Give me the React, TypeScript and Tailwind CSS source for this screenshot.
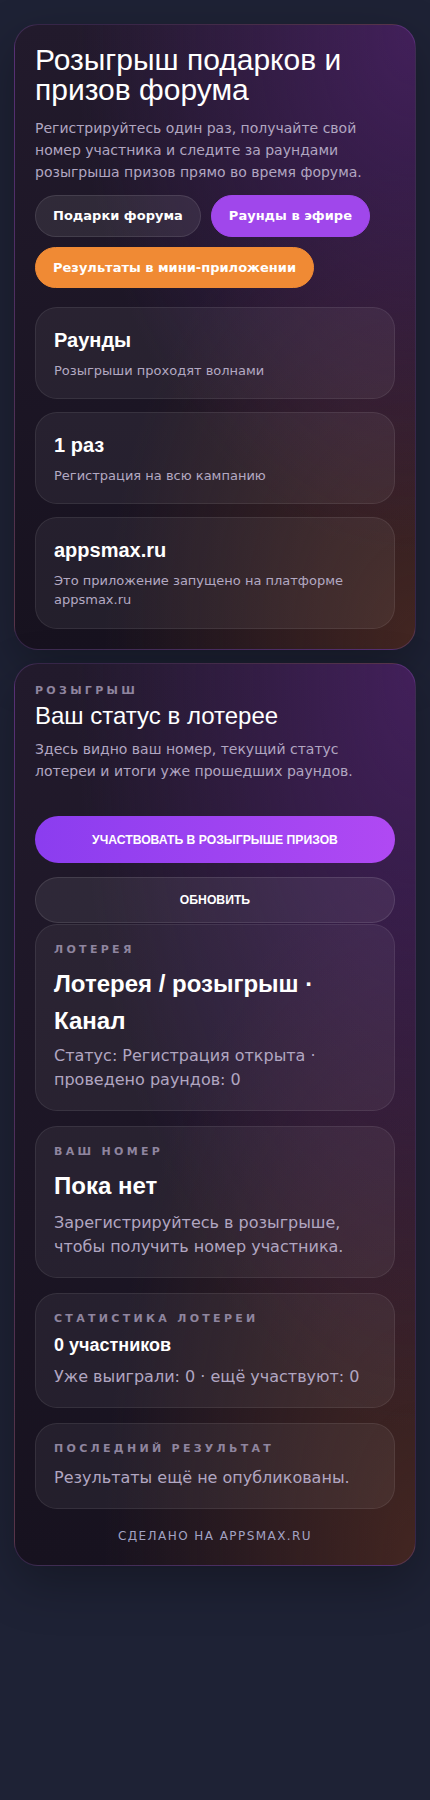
import React from "react";

const sans = "font-['DejaVu_Sans',sans-serif]";
const head = "font-['Liberation_Sans',Arial,sans-serif]";

const shell =
  "rounded-[24px] border border-[rgba(168,110,220,0.22)] p-5 shadow-[0_18px_50px_rgba(0,0,0,0.28)] bg-[radial-gradient(ellipse_at_100%_0%,rgba(80,34,110,0.7),transparent_60%),radial-gradient(ellipse_at_100%_100%,rgba(90,48,34,0.65),transparent_55%),linear-gradient(180deg,#221a2c,#17121f)]";

const tile =
  "rounded-[22px] border border-[rgba(255,255,255,0.08)] bg-[rgba(255,255,255,0.055)]";

function Stat({ title, text }: { title: string; text: string }) {
  return (
    <div className={`${tile} px-[18px] py-[18px]`}>
      <div className={`${head} text-[20px] leading-[28px] font-bold text-white`}>{title}</div>
      <div className={`${sans} mt-[6.5px] text-[13px] leading-[19.5px] text-[#b3a9c2]`}>{text}</div>
    </div>
  );
}

function Label({ children }: { children: React.ReactNode }) {
  return (
    <div className={`${sans} text-[11px] leading-[13px] font-bold uppercase tracking-[0.3em] text-[#8f859f]`}>
      {children}
    </div>
  );
}

export default function App() {
  return (
    <div className={`${sans} min-h-[1800px] bg-[#1e2235] px-[14px] pt-[24px]`}>
      <div className="flex flex-col gap-[13px]">
        {/* intro card */}
        <section className={shell}>
          <h1 className={`${head} text-[30px] leading-[30px] font-normal text-white`}>
            Розыгрыш подарков и призов форума
          </h1>
          <p className="mt-[12px] text-[14px] leading-[22px] text-[#b1a6c1]">
            Регистрируйтесь один раз, получайте свой номер участника и следите за раундами розыгрыша призов прямо во время форума.
          </p>
          <div className="mt-[12px] flex flex-wrap gap-[10px]">
            <span className="rounded-full border border-[rgba(255,255,255,0.1)] bg-[rgba(255,255,255,0.08)] px-[17px] py-[10px] text-[13px] leading-[19.5px] font-bold text-white">
              Подарки форума
            </span>
            <span className="rounded-full border border-[#a047eb] bg-[#a047eb] px-[17px] py-[10px] text-[13px] leading-[19.5px] font-bold text-white">
              Раунды в эфире
            </span>
            <span className="rounded-full border border-[#f08a34] bg-[#f08a34] px-[17px] py-[10px] text-[13px] leading-[19.5px] font-bold text-white">
              Результаты в мини-приложении
            </span>
          </div>
          <div className="mt-[19px] flex flex-col gap-[13px]">
            <Stat title="Раунды" text="Розыгрыши проходят волнами" />
            <Stat title="1 раз" text="Регистрация на всю кампанию" />
            <Stat title="appsmax.ru" text="Это приложение запущено на платформе appsmax.ru" />
          </div>
        </section>

        {/* lottery status card */}
        <section className={shell}>
          <Label>Розыгрыш</Label>
          <h2 className={`${head} mt-[4px] text-[24px] leading-[29px] font-normal text-white`}>
            Ваш статус в лотерее
          </h2>
          <p className="mt-[8px] text-[14px] leading-[22.4px] text-[#b1a6c1]">
            Здесь видно ваш номер, текущий статус лотереи и итоги уже прошедших раундов.
          </p>

          <div className="mt-[34px] flex flex-col gap-[14px]">
            <button className={`${head} h-[47px] w-full rounded-full bg-[linear-gradient(90deg,#8b3def,#b049f3)] text-[12.2px] font-bold uppercase text-white`}>
              Участвовать в розыгрыше призов
            </button>
            <button className={`${head} h-[46px] w-full rounded-full border border-[rgba(255,255,255,0.1)] bg-[rgba(255,255,255,0.07)] text-[12.2px] font-bold uppercase text-white`}>
              Обновить
            </button>
          </div>

          <div className="mt-[1px] flex flex-col gap-[15px]">
            <div className={`${tile} p-[18px]`}>
              <Label>Лотерея</Label>
              <div className={`${head} mt-[10px] text-[24px] leading-[36.5px] font-bold text-white`}>
                Лотерея / розыгрыш · Канал
              </div>
              <div className="mt-[5px] text-[16px] leading-[24px] text-[#b1a6c1]">
                Статус: Регистрация открыта · проведено раундов: 0
              </div>
            </div>

            <div className={`${tile} p-[18px]`}>
              <Label>Ваш номер</Label>
              <div className={`${head} mt-[10px] text-[24px] leading-[36.5px] font-bold text-white`}>
                Пока нет
              </div>
              <div className="mt-[6px] text-[16px] leading-[24px] text-[#b1a6c1]">
                Зарегистрируйтесь в розыгрыше, чтобы получить номер участника.
              </div>
            </div>

            <div className={`${tile} p-[18px]`}>
              <Label>Статистика лотереи</Label>
              <div className={`${head} mt-[8px] text-[18px] leading-[25px] font-bold text-white`}>
                0 участников
              </div>
              <div className="mt-[7px] text-[16px] leading-[24px] text-[#b1a6c1]">
                Уже выиграли: 0 · ещё участвуют: 0
              </div>
            </div>

            <div className={`${tile} p-[18px]`}>
              <Label>Последний результат</Label>
              <div className="mt-[11px] text-[16px] leading-[24px] text-[#b1a6c1]">
                Результаты ещё не опубликованы.
              </div>
            </div>
          </div>

          <div className="mt-[19px] text-center text-[12px] leading-[17px] uppercase tracking-[0.12em] text-[#a3a3c4]">
            Сделано на appsmax.ru
          </div>
        </section>
      </div>
    </div>
  );
}
